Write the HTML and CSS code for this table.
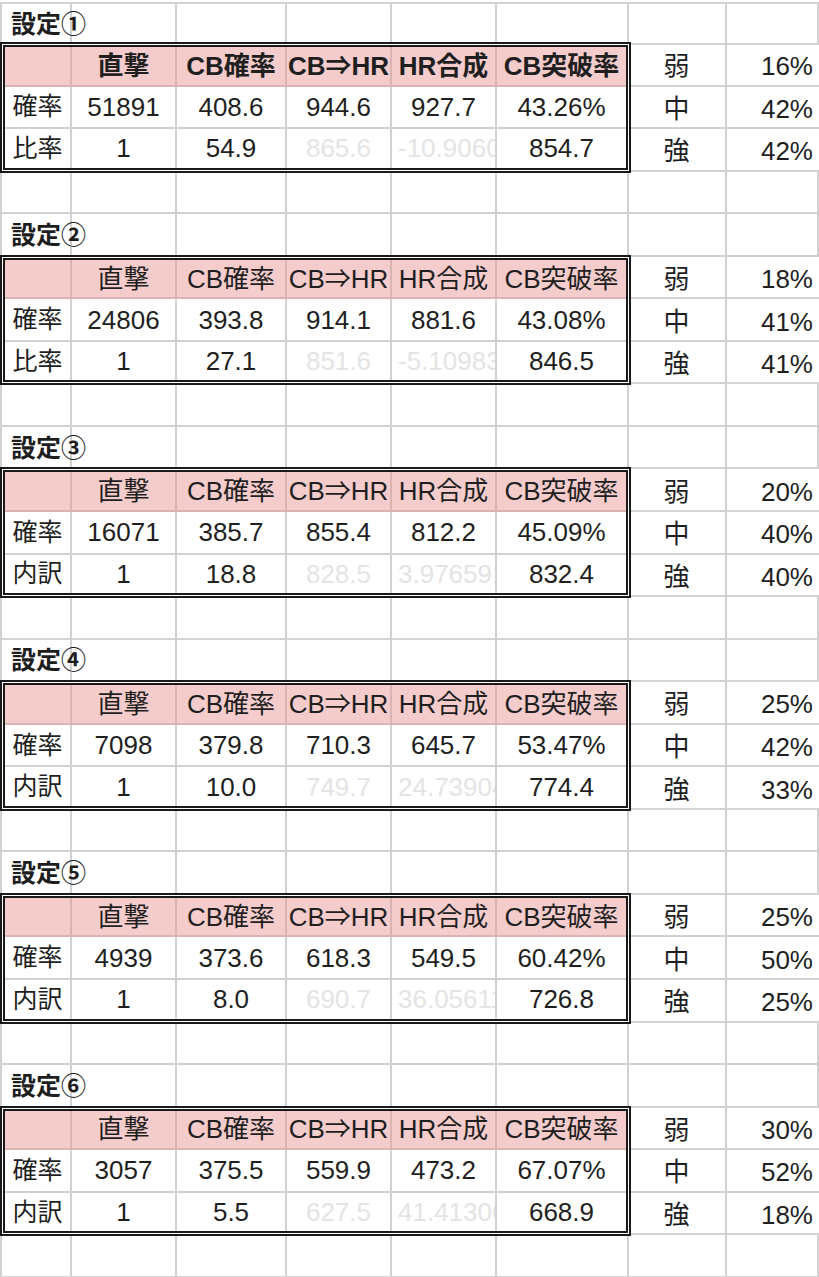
FILE: index.html
```html
<!DOCTYPE html>
<html lang="ja">
<head>
<meta charset="utf-8">
<title>設定</title>
<link rel="stylesheet" href="styles.css">
</head>
<body>
<main class="sheet">

  <section class="block first">
    <div class="row title-row">
      <div class="cell title">設定①</div><div class="cell"></div><div class="cell"></div><div class="cell"></div><div class="cell"></div><div class="cell"></div><div class="cell"></div><div class="cell"></div>
    </div>
    <div class="band">
      <div class="box strong">
        <div class="c"></div><div class="c">直撃</div><div class="c">CB確率</div><div class="c">CB⇒HR</div><div class="c">HR合成</div><div class="c">CB突破率</div>
        <div class="c">確率</div><div class="c">51891</div><div class="c">408.6</div><div class="c">944.6</div><div class="c">927.7</div><div class="c">43.26%</div>
        <div class="c">比率</div><div class="c">1</div><div class="c">54.9</div><div class="c faint">865.6</div><div class="c faint clip">-10.90602</div><div class="c">854.7</div>
      </div>
      <div class="side">
        <div class="s">弱</div><div class="s pct">16%</div>
        <div class="s">中</div><div class="s pct">42%</div>
        <div class="s">強</div><div class="s pct">42%</div>
      </div>
    </div>
    <div class="row">
      <div class="cell"></div><div class="cell"></div><div class="cell"></div><div class="cell"></div><div class="cell"></div><div class="cell"></div><div class="cell"></div><div class="cell"></div>
    </div>
  </section>

  <section class="block">
    <div class="row title-row">
      <div class="cell title">設定②</div><div class="cell"></div><div class="cell"></div><div class="cell"></div><div class="cell"></div><div class="cell"></div><div class="cell"></div><div class="cell"></div>
    </div>
    <div class="band">
      <div class="box">
        <div class="c"></div><div class="c">直撃</div><div class="c">CB確率</div><div class="c">CB⇒HR</div><div class="c">HR合成</div><div class="c">CB突破率</div>
        <div class="c">確率</div><div class="c">24806</div><div class="c">393.8</div><div class="c">914.1</div><div class="c">881.6</div><div class="c">43.08%</div>
        <div class="c">比率</div><div class="c">1</div><div class="c">27.1</div><div class="c faint">851.6</div><div class="c faint clip">-5.109832</div><div class="c">846.5</div>
      </div>
      <div class="side">
        <div class="s">弱</div><div class="s pct">18%</div>
        <div class="s">中</div><div class="s pct">41%</div>
        <div class="s">強</div><div class="s pct">41%</div>
      </div>
    </div>
    <div class="row">
      <div class="cell"></div><div class="cell"></div><div class="cell"></div><div class="cell"></div><div class="cell"></div><div class="cell"></div><div class="cell"></div><div class="cell"></div>
    </div>
  </section>

  <section class="block">
    <div class="row title-row">
      <div class="cell title">設定③</div><div class="cell"></div><div class="cell"></div><div class="cell"></div><div class="cell"></div><div class="cell"></div><div class="cell"></div><div class="cell"></div>
    </div>
    <div class="band">
      <div class="box">
        <div class="c"></div><div class="c">直撃</div><div class="c">CB確率</div><div class="c">CB⇒HR</div><div class="c">HR合成</div><div class="c">CB突破率</div>
        <div class="c">確率</div><div class="c">16071</div><div class="c">385.7</div><div class="c">855.4</div><div class="c">812.2</div><div class="c">45.09%</div>
        <div class="c">内訳</div><div class="c">1</div><div class="c">18.8</div><div class="c faint">828.5</div><div class="c faint clip">3.9765914</div><div class="c">832.4</div>
      </div>
      <div class="side">
        <div class="s">弱</div><div class="s pct">20%</div>
        <div class="s">中</div><div class="s pct">40%</div>
        <div class="s">強</div><div class="s pct">40%</div>
      </div>
    </div>
    <div class="row">
      <div class="cell"></div><div class="cell"></div><div class="cell"></div><div class="cell"></div><div class="cell"></div><div class="cell"></div><div class="cell"></div><div class="cell"></div>
    </div>
  </section>

  <section class="block">
    <div class="row title-row">
      <div class="cell title">設定④</div><div class="cell"></div><div class="cell"></div><div class="cell"></div><div class="cell"></div><div class="cell"></div><div class="cell"></div><div class="cell"></div>
    </div>
    <div class="band">
      <div class="box">
        <div class="c"></div><div class="c">直撃</div><div class="c">CB確率</div><div class="c">CB⇒HR</div><div class="c">HR合成</div><div class="c">CB突破率</div>
        <div class="c">確率</div><div class="c">7098</div><div class="c">379.8</div><div class="c">710.3</div><div class="c">645.7</div><div class="c">53.47%</div>
        <div class="c">内訳</div><div class="c">1</div><div class="c">10.0</div><div class="c faint">749.7</div><div class="c faint clip">24.739041</div><div class="c">774.4</div>
      </div>
      <div class="side">
        <div class="s">弱</div><div class="s pct">25%</div>
        <div class="s">中</div><div class="s pct">42%</div>
        <div class="s">強</div><div class="s pct">33%</div>
      </div>
    </div>
    <div class="row">
      <div class="cell"></div><div class="cell"></div><div class="cell"></div><div class="cell"></div><div class="cell"></div><div class="cell"></div><div class="cell"></div><div class="cell"></div>
    </div>
  </section>

  <section class="block">
    <div class="row title-row">
      <div class="cell title">設定⑤</div><div class="cell"></div><div class="cell"></div><div class="cell"></div><div class="cell"></div><div class="cell"></div><div class="cell"></div><div class="cell"></div>
    </div>
    <div class="band">
      <div class="box">
        <div class="c"></div><div class="c">直撃</div><div class="c">CB確率</div><div class="c">CB⇒HR</div><div class="c">HR合成</div><div class="c">CB突破率</div>
        <div class="c">確率</div><div class="c">4939</div><div class="c">373.6</div><div class="c">618.3</div><div class="c">549.5</div><div class="c">60.42%</div>
        <div class="c">内訳</div><div class="c">1</div><div class="c">8.0</div><div class="c faint">690.7</div><div class="c faint clip">36.056114</div><div class="c">726.8</div>
      </div>
      <div class="side">
        <div class="s">弱</div><div class="s pct">25%</div>
        <div class="s">中</div><div class="s pct">50%</div>
        <div class="s">強</div><div class="s pct">25%</div>
      </div>
    </div>
    <div class="row">
      <div class="cell"></div><div class="cell"></div><div class="cell"></div><div class="cell"></div><div class="cell"></div><div class="cell"></div><div class="cell"></div><div class="cell"></div>
    </div>
  </section>

  <section class="block">
    <div class="row title-row">
      <div class="cell title">設定⑥</div><div class="cell"></div><div class="cell"></div><div class="cell"></div><div class="cell"></div><div class="cell"></div><div class="cell"></div><div class="cell"></div>
    </div>
    <div class="band">
      <div class="box">
        <div class="c"></div><div class="c">直撃</div><div class="c">CB確率</div><div class="c">CB⇒HR</div><div class="c">HR合成</div><div class="c">CB突破率</div>
        <div class="c">確率</div><div class="c">3057</div><div class="c">375.5</div><div class="c">559.9</div><div class="c">473.2</div><div class="c">67.07%</div>
        <div class="c">内訳</div><div class="c">1</div><div class="c">5.5</div><div class="c faint">627.5</div><div class="c faint clip">41.413062</div><div class="c">668.9</div>
      </div>
      <div class="side">
        <div class="s">弱</div><div class="s pct">30%</div>
        <div class="s">中</div><div class="s pct">52%</div>
        <div class="s">強</div><div class="s pct">18%</div>
      </div>
    </div>
    <div class="row">
      <div class="cell"></div><div class="cell"></div><div class="cell"></div><div class="cell"></div><div class="cell"></div><div class="cell"></div><div class="cell"></div><div class="cell"></div>
    </div>
  </section>

</main>
</body>
</html>
```

FILE: styles.css
```css
* { box-sizing: border-box; }

html, body {
  margin: 0;
  padding: 0;
  background: #ffffff;
}

body {
  width: 819px;
  height: 1277px;
  overflow: hidden;
  font-family: "Liberation Sans", "Noto Sans CJK JP", sans-serif;
  font-size: 26px;
  color: #1f1f1f;
}

.sheet {
  margin-top: 2px;
  border-top: 2px solid #d2d2d2;
}

/* plain spreadsheet rows */
.row {
  display: grid;
  grid-template-columns: 70px 105px 110px 105px 105px 132px 98px 1fr;
  height: 42.55px;
  border-left: 2px solid #d2d2d2;
}

.first .title-row {
  height: 40px;
}

.cell {
  border-right: 2px solid #d2d2d2;
  border-bottom: 2px solid #d2d2d2;
}

.title {
  display: flex;
  align-items: center;
  padding: 0 0 3px 9px;
  font-family: "Noto Sans CJK JP", sans-serif;
  font-weight: 700;
  font-size: 25px;
  white-space: nowrap;
  color: #1e1e1e;
}

/* band: bordered table + side column */
.band {
  display: flex;
  height: 127.65px;
}

.box {
  flex: none;
  position: relative;
  z-index: 1;
  width: 631px;
  height: 130.65px;
  margin: -2px -3px 0 0;
  border: 5px double #1a1a1a;
  background: #ffffff;
  display: grid;
  grid-template-columns: 67px 105px 110px 105px 105px 1fr;
  grid-template-rows: 39.55px 42.55px 1fr;
}

.c {
  display: flex;
  align-items: center;
  justify-content: center;
  line-height: 1;
  white-space: nowrap;
  overflow: hidden;
  border-right: 2px solid #d2d2d2;
  border-bottom: 2px solid #d2d2d2;
}

.c:nth-child(6n) {
  border-right: none;
}

.c:nth-child(n+13) {
  border-bottom: none;
}

.c:nth-child(-n+6) {
  background: #f4cccc;
  border-color: #dab3b3;
}

.strong .c:nth-child(-n+6) {
  font-weight: 700;
}

.c:nth-child(6n+1) {
  font-size: 25px;
}

.faint {
  color: #e4e4e4;
}

.clip {
  justify-content: flex-start;
  padding-left: 6px;
}

.side {
  flex: 1;
  display: grid;
  grid-template-columns: 99px 1fr;
  grid-template-rows: repeat(3, 1fr);
}

.s {
  display: flex;
  align-items: center;
  justify-content: center;
  padding-top: 4px;
  line-height: 1;
  border-bottom: 2px solid #d2d2d2;
}

.s:nth-child(odd) {
  border-right: 2px solid #d2d2d2;
}

.pct {
  justify-content: flex-end;
  padding-right: 6px;
}
```
